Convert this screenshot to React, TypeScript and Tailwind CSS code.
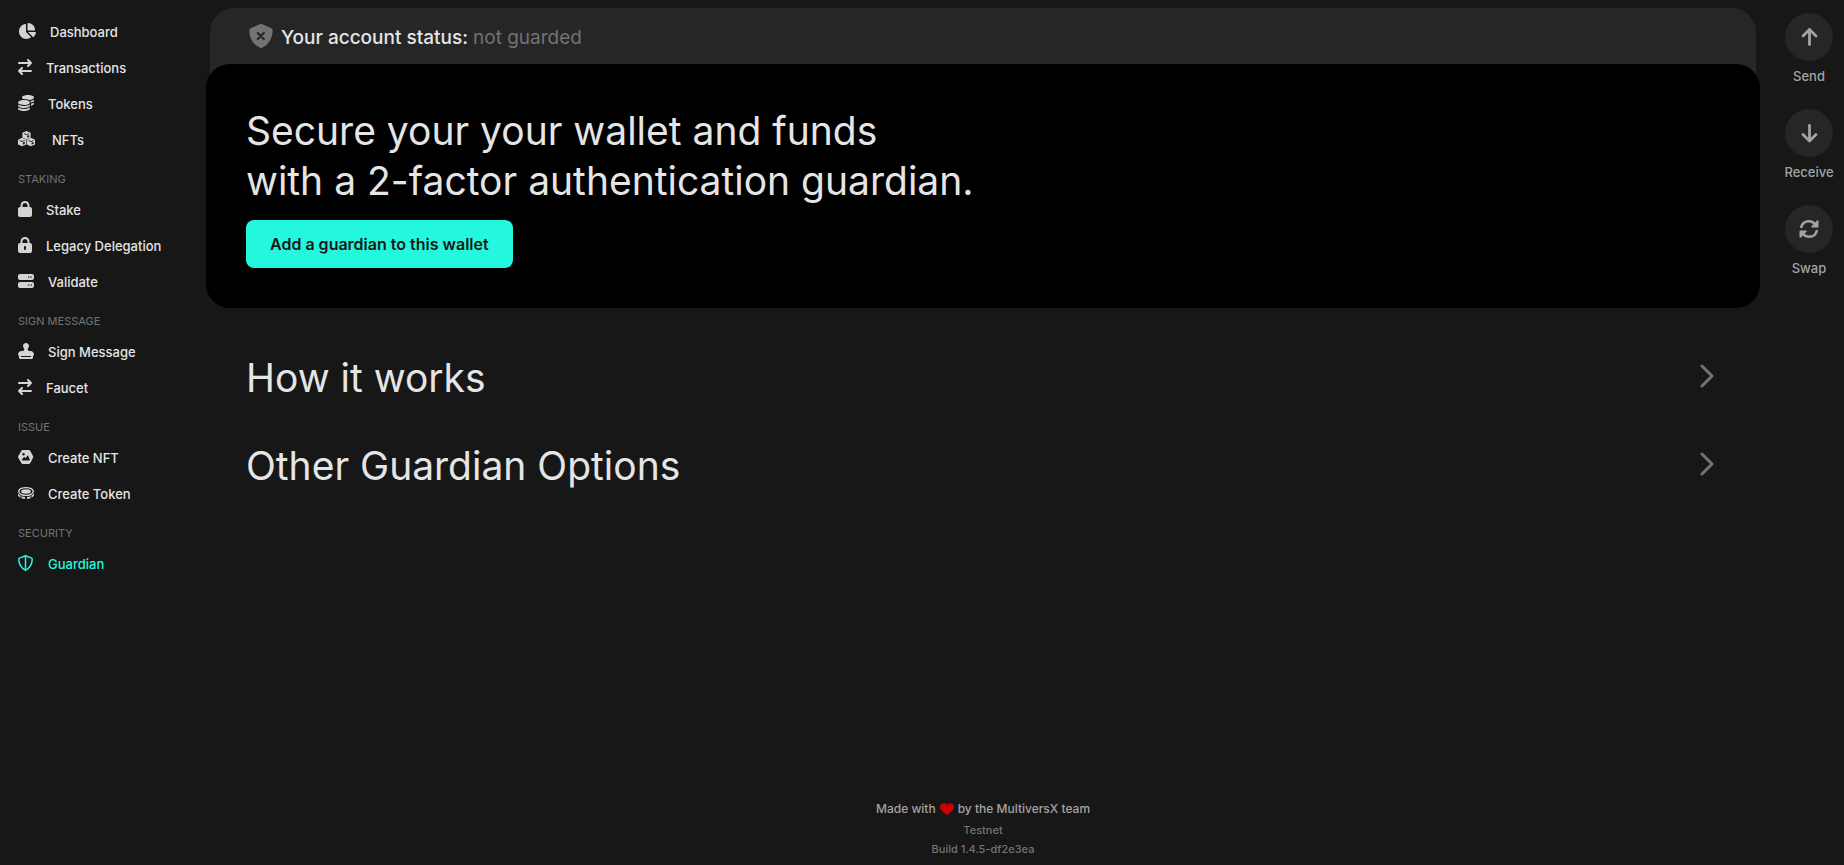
import type { ReactNode } from "react";
import { FaChartPie, FaCoins, FaHeart, FaLock, FaServer, FaStamp } from "react-icons/fa6";

type NavItem = { label: string; icon: ReactNode; active?: boolean };
type NavGroup = { title?: string; items: NavItem[] };

function TransferIcon() {
  return (
    <svg viewBox="0 0 14 16" className="h-4 w-[14px]" aria-hidden="true">
      <path
        d="M1 4h12M10 1l3 3-3 3M13 12H1M4 9l-3 3 3 3"
        fill="none"
        stroke="currentColor"
        strokeWidth="2"
        strokeLinecap="round"
        strokeLinejoin="round"
      />
    </svg>
  );
}

function HexCubesIcon() {
  return (
    <svg viewBox="0 0 17 16" className="mr-[3px] h-4 w-[17px]" aria-hidden="true">
      <g fill="currentColor">
        <path d="M8.5 0 12.6 1.800v4.800L8.500 8.500 4.400 6.600V1.800z" />
        <path d="M4.100 6.800 8.200 8.700v4.700L4.100 15.300 0 13.400V8.700z" />
        <path d="M12.900 6.800 17 8.700v4.700l-4.100 1.900-4.100-1.900V8.700z" />
      </g>
      <g fill="none" stroke="#171717" strokeWidth="0.900">
        <path d="M6 2.600 8.500 3.700 11 2.600M1.600 9.500l2.500 1.100 2.500-1.100M10.400 9.500l2.500 1.100 2.500-1.100" />
      </g>
      <path fill="#171717" d="M9.200 4.800l2-.9v1.900l-2 1zM4.800 11.700l2-.9v1.900l-2 1zM13.600 11.700l2-.9v1.900l-2 1z" />
    </svg>
  );
}

function KeyholeLockIcon() {
  return (
    <svg viewBox="0 0 14 16" className="h-4 w-[14px]" aria-hidden="true">
      <path
        fill="currentColor"
        fillRule="evenodd"
        d="M4.500 4.500V6h5V4.500a2.500 2.500 0 0 0-5 0zM2.500 6V4.500a4.500 4.500 0 0 1 9 0V6H12a2 2 0 0 1 2 2v6a2 2 0 0 1-2 2H2a2 2 0 0 1-2-2V8a2 2 0 0 1 2-2zM8 10a1 1 0 0 0-2 0v2a1 1 0 0 0 2 0z"
      />
    </svg>
  );
}

function HexImageIcon() {
  return (
    <svg viewBox="0 0 16 16" className="size-4" aria-hidden="true">
      <path
        fill="currentColor"
        fillRule="evenodd"
        d="M4.800 1h6c.6 0 1.200.3 1.500.9l2.700 5.200c.3.500.3 1.200 0 1.700l-2.700 5.300c-.3.600-.9.900-1.500.9h-6c-.6 0-1.200-.3-1.500-.9L.3 8.800c-.3-.5-.3-1.200 0-1.700l3-5.200c.3-.6.9-.9 1.500-.9zM5.500 4a1.300 1.300 0 1 0 0 2.600 1.300 1.300 0 0 0 0-2.600zM9.300 6.700 7.500 9.300l-.9-1c-.2-.3-.6-.3-.8 0L4 10.600c-.2.400 0 .8.400.8h6.900c.4 0 .7-.4.500-.8l-1.700-3.900c-.2-.3-.6-.3-.8 0z"
      />
    </svg>
  );
}

function CoinIcon() {
  return (
    <svg viewBox="0 0 16 16" className="size-4" aria-hidden="true">
      <ellipse cx="8" cy="6.500" rx="7.300" ry="3.900" fill="none" stroke="currentColor" strokeWidth="1.400" />
      <ellipse cx="8" cy="6.500" rx="4.800" ry="2.200" fill="currentColor" />
      <path
        fill="currentColor"
        d="M0 8.500c.6 1 1.500 1.700 2.500 2.200v2C1 12 0 11 0 10zM3.500 11.200c1 .4 2.200.6 3.500.7V14c-1.300-.1-2.500-.3-3.500-.7zM9 11.900c1.300-.1 2.500-.3 3.500-.7v2.100c-1 .4-2.200.6-3.500.7zM13.500 10.700c1-.5 1.900-1.200 2.500-2.200V10c0 1-1 2-2.500 2.700z"
      />
    </svg>
  );
}

function ShieldLineIcon() {
  return (
    <svg viewBox="0 0 16 16" className="size-4" aria-hidden="true">
      <path
        d="M7.500.8 13.600 3.100c.4.200.6.500.6.900 0 4.600-1.700 8.800-6.700 11.200C2.500 12.800.8 8.600.8 4c0-.4.200-.7.6-.9zM7.500 1v14"
        fill="none"
        stroke="currentColor"
        strokeWidth="1.500"
        strokeLinejoin="round"
      />
    </svg>
  );
}

function ShieldCrossIcon() {
  return (
    <svg viewBox="0 0 24 24" className="size-6 text-[#737373]" aria-hidden="true">
      <path
        fill="currentColor"
        d="M12 0c.2 0 .4 0 .6.100l9.400 4c1.100.5 1.600 1.300 1.600 2.400C23.500 13 21 20 12.900 23.800c-.6.300-1.200.3-1.800 0C3 20 .5 13 .4 6.500.4 5.400.9 4.600 2 4.100l9.400-4c.2-.1.400-.1.600-.1z"
      />
      <path d="M8.800 9l6 6M14.800 9l-6 6" stroke="#262626" strokeWidth="2.200" strokeLinecap="round" />
    </svg>
  );
}

function ArrowIcon({ down = false }: { down?: boolean }) {
  return (
    <svg viewBox="0 0 20 20" className="size-5" aria-hidden="true">
      <path
        d={down ? "M10.500 2.500v15M4 11.500l6.500 6.500 6.500-6.500" : "M10.500 17.500v-15M4 9l6.500-6.500L17 9"}
        fill="none"
        stroke="currentColor"
        strokeWidth="2.800"
        strokeLinecap="round"
        strokeLinejoin="round"
      />
    </svg>
  );
}

function SwapIcon() {
  return (
    <svg viewBox="0 0 20 20" className="size-5" aria-hidden="true">
      <path
        d="M2.300 8C3.200 4.300 6.300 2.200 9.700 2.200c2.500 0 4.600 1 6 2.800M17.700 12c-.9 3.700-4 5.800-7.400 5.800-2.500 0-4.600-1-6-2.800"
        fill="none"
        stroke="currentColor"
        strokeWidth="2.500"
        strokeLinecap="round"
      />
      <path
        fill="currentColor"
        d="M19.500 2.200v5.600c0 .5-.3.800-.8.800h-5.600c-.8 0-1.100-.8-.6-1.300l5.600-5.700c.5-.5 1.400-.2 1.400.6zM.5 17.800v-5.600c0-.5.3-.8.800-.8h5.600c.8 0 1.100.8.600 1.300l-5.600 5.700c-.5.5-1.400.2-1.400-.6z"
      />
    </svg>
  );
}

function ChevronIcon() {
  return (
    <svg viewBox="0 0 14 24" className="h-6 w-[14px] text-[#737373]" aria-hidden="true">
      <path
        d="M2 2l10 10L2 22"
        fill="none"
        stroke="currentColor"
        strokeWidth="3"
        strokeLinecap="round"
        strokeLinejoin="round"
      />
    </svg>
  );
}

const groups: NavGroup[] = [
  {
    items: [
      { label: "Dashboard", icon: <FaChartPie className="h-4 w-[18px]" /> },
      { label: "Transactions", icon: <TransferIcon /> },
      { label: "Tokens", icon: <FaCoins className="size-4" /> },
      { label: "NFTs", icon: <HexCubesIcon /> },
    ],
  },
  {
    title: "Staking",
    items: [
      { label: "Stake", icon: <FaLock className="h-4 w-[14px]" /> },
      { label: "Legacy Delegation", icon: <KeyholeLockIcon /> },
      { label: "Validate", icon: <FaServer className="size-4" /> },
    ],
  },
  {
    title: "Sign message",
    items: [
      { label: "Sign Message", icon: <FaStamp className="size-4" /> },
      { label: "Faucet", icon: <TransferIcon /> },
    ],
  },
  {
    title: "Issue",
    items: [
      { label: "Create NFT", icon: <HexImageIcon /> },
      { label: "Create Token", icon: <CoinIcon /> },
    ],
  },
  { title: "Security", items: [{ label: "Guardian", icon: <ShieldLineIcon />, active: true }] },
];

const actions = [
  { label: "Send", icon: <ArrowIcon /> },
  { label: "Receive", icon: <ArrowIcon down /> },
  { label: "Swap", icon: <SwapIcon /> },
];

function Sidebar() {
  return (
    <nav className="w-[206px] shrink-0 pt-[13px] pl-[18px]" aria-label="Main">
      {groups.map((group, i) => (
        <div key={i}>
          {group.title && (
            <h2 className="flex h-[34px] items-center pt-[10px] text-[11px] text-[#737373] uppercase">
              {group.title}
            </h2>
          )}
          <ul>
            {group.items.map((item) => (
              <li key={item.label}>
                <a
                  href="#"
                  className={`flex h-9 items-center gap-[14px] text-[13px] leading-5 font-medium whitespace-nowrap ${
                    item.active ? "text-[#23f7dd]" : "text-[#d4d4d4]"
                  }`}
                >
                  {item.icon}
                  <span className={item.active ? "pt-0.5" : "pt-0.5 text-[#e5e5e5]"}>{item.label}</span>
                </a>
              </li>
            ))}
          </ul>
        </div>
      ))}
    </nav>
  );
}

function Section({ title }: { title: string }) {
  return (
    <button type="button" className="flex h-[88px] w-full items-center justify-between pr-[46px] pl-10 text-left">
      <span className="pt-1 text-[39px] leading-[50px]">{title}</span>
      <ChevronIcon />
    </button>
  );
}

export default function App() {
  return (
    <div className="flex min-h-screen bg-[#171717] font-['Inter','Liberation_Sans',sans-serif] text-[#e5e5e5]">
      <Sidebar />
      <main className="flex min-w-0 flex-1 flex-col pt-2">
        <div className="mx-1 -mb-6 flex h-20 items-start gap-2 rounded-t-3xl bg-[#262626] px-[39px] pt-4">
          <ShieldCrossIcon />
          <p className="pt-0.5 text-[19px] leading-6 font-medium">
            Your account status: <span className="font-normal text-[#737373]">not guarded</span>
          </p>
        </div>
        <section className="rounded-3xl bg-black px-10 pt-[42px] pb-10">
          <h1 className="text-[39px] leading-[50px]">
            Secure your your wallet and funds
            <br />
            with a 2-factor authentication guardian.
          </h1>
          <button
            type="button"
            className="mt-[14px] h-12 rounded-lg bg-[#23f7dd] px-6 text-base font-semibold text-[#171717]"
          >
            Add a guardian to this wallet
          </button>
        </section>
        <div className="pt-6">
          <Section title="How it works" />
          <Section title="Other Guardian Options" />
        </div>
        <footer className="mt-auto pb-[6px] text-center">
          <p className="flex items-center justify-center gap-1 text-xs leading-6 font-medium text-[#a3a3a3]">
            Made with <FaHeart className="size-[14px] text-[#cc0000]" aria-label="love" /> by the MultiversX team
          </p>
          <p className="text-[11px] leading-[19px] font-medium text-[#737373]">Testnet</p>
          <p className="text-[11px] leading-[19px] font-medium text-[#737373]">Build 1.4.5-df2e3ea</p>
        </footer>
      </main>
      <aside className="flex w-[84px] shrink-0 flex-col items-center pt-[13px] pl-[14px]">
        {actions.map((action) => (
          <button
            key={action.label}
            type="button"
            className="flex h-24 flex-col items-center gap-[5px] text-[13px] leading-5 font-medium text-[#a3a3a3]"
          >
            <span className="flex size-12 items-center justify-center rounded-full bg-[#262626]">{action.icon}</span>
            {action.label}
          </button>
        ))}
      </aside>
    </div>
  );
}
